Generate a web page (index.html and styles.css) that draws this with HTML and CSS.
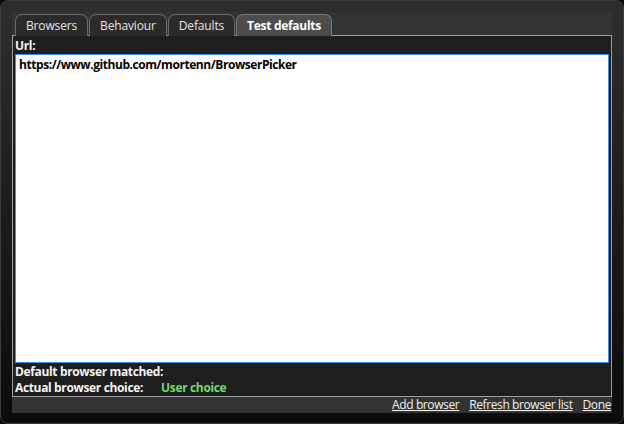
FILE: index.html
```html
<!DOCTYPE html>
<html>
<head>
<meta charset="utf-8">
<link rel="stylesheet" href="styles.css">
</head>
<body>
<div class="window">
  <div class="frame">
    <div class="tabs">
      <div class="tab">Browsers</div>
      <div class="tab">Behaviour</div>
      <div class="tab">Defaults</div>
      <div class="tab active">Test defaults</div>
    </div>
    <div class="panel">
      <div class="label">Url:</div>
      <div class="urlbox">https://www.github.com/mortenn/BrowserPicker</div>
      <div class="label">Default browser matched:</div>
      <div class="label row">Actual browser choice:<span class="choice">User choice</span></div>
    </div>
    <div class="footer">
      <a class="link">Add browser</a>
      <a class="link">Refresh browser list</a>
      <a class="link">Done</a>
    </div>
  </div>
</div>
</body>
</html>
```
FILE: styles.css
```css
html, body {
  margin: 0;
  padding: 0;
  background: #0a0a0a;
}
body {
  font-family: "Open Sans", "Noto Sans", sans-serif;
  font-size: 12px;
  color: #e8e8e8;
}
.window {
  box-sizing: border-box;
  width: 624px;
  height: 424px;
  border: 1px solid #3c3c3c;
  border-radius: 8px;
  background: linear-gradient(#2e2e2e, #0b0b0b);
  padding: 11px 11px 10px 11px;
}
.frame {
  width: 600px;
  height: 401px;
  background: #333333;
  display: flex;
  flex-direction: column;
}
.tabs {
  display: flex;
  gap: 1px;
  padding: 2px 0 0 3px;
  height: 21px;
  position: relative;
  z-index: 1;
}
.tab {
  box-sizing: border-box;
  height: 22px;
  padding: 1px 10px 0 10px;
  border: 1px solid #6a6a6a;
  border-bottom: none;
  border-radius: 7px 7px 0 0;
  background: #2b2b2b;
  color: #e4e4e4;
  line-height: 20px;
  letter-spacing: -0.15px;
}
.tab.active {
  background: #4c4c4c;
  font-weight: bold;
  color: #ffffff;
  border-color: #7a7a7a;
  letter-spacing: -0.3px;
}
.panel {
  box-sizing: border-box;
  height: 362px;
  border: 1px solid #a0a0a0;
  background: #1e1e1e;
  padding: 2px 2px 0 2px;
  display: flex;
  flex-direction: column;
}
.label {
  font-weight: bold;
  color: #f4f4f4;
  line-height: 15px;
  height: 16px;
  letter-spacing: -0.35px;
}
.urlbox {
  box-sizing: border-box;
  height: 309px;
  background: #ffffff;
  border: 1px solid #3c8ee0;
  color: #000;
  font-weight: bold;
  padding: 1px 3px;
  letter-spacing: -0.44px;
  margin-bottom: 1px;
}
.choice {
  color: #72dc72;
  margin-left: 18px;
}
.footer {
  display: flex;
  justify-content: flex-end;
  gap: 10px;
  height: 16px;
  line-height: 16px;
  padding-right: 1px;
}
.link {
  color: #f2f2f2;
  text-decoration: underline;
  letter-spacing: -0.4px;
}
```
